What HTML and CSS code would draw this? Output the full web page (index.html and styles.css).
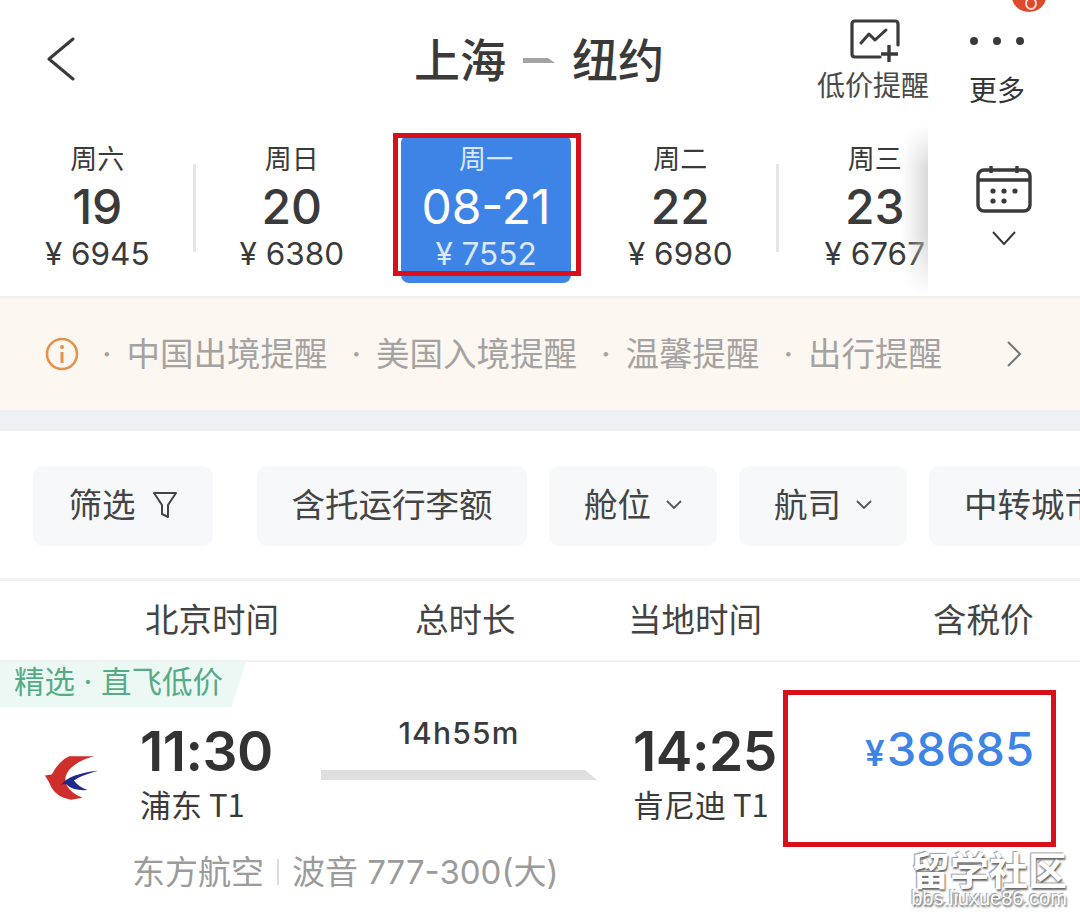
FILE: index.html
```html
<!DOCTYPE html>
<html lang="zh-CN">
<head>
    <meta charset="UTF-8">
    <title>上海 - 纽约</title>
    <link rel="stylesheet" href="styles.css">
</head>
<body>
    <div class="page">
        <div class="header">
            <svg class="back" width="30" height="44" viewBox="0 0 30 44"><path d="M27 2 L3 22 L27 42" fill="none" stroke="#3a3a3a" stroke-width="3" stroke-linecap="round" stroke-linejoin="round"/></svg>
            <h1 class="title">
                <span>上海</span>
                <svg width="34" height="8" viewBox="0 0 34 8"><path d="M1 2 H26 L33 7 H1 Z" fill="#a3a3a3"/></svg>
                <span>纽约</span>
            </h1>
            <div class="actions">
                <div class="action action-alert">
                    <svg width="50" height="44" viewBox="0 0 50 44"><path d="M30 38 H5 Q2 38 2 35 V5 Q2 2 5 2 H45 Q48 2 48 5 V26" fill="none" stroke="#3a3a3a" stroke-width="3.2" stroke-linecap="round"/><path d="M11 24 L19 15 L25 21 L36 11" fill="none" stroke="#3a3a3a" stroke-width="3" stroke-linecap="round" stroke-linejoin="round"/><path d="M39 26 V43 M31 35 H48" stroke="#3a3a3a" stroke-width="3.4"/></svg>
                    <span>低价提醒</span>
                </div>
                <div class="action action-more">
                    <div class="dots"><i></i><i></i><i></i></div>
                    <span>更多</span>
                    <div class="badge"></div>
                </div>
            </div>
        </div>

        <div class="dates">
            <div class="date-list">
                <div class="date-item">
                    <div class="weekday">周六</div><div class="day">19</div><div class="price">¥ 6945</div>
                </div>
                <div class="date-item sep">
                    <div class="weekday">周日</div><div class="day">20</div><div class="price">¥ 6380</div>
                </div>
                <div class="date-item active">
                    <div class="weekday">周一</div><div class="day">08-21</div><div class="price">¥ 7552</div>
                    <div class="mark mark-date"></div>
                </div>
                <div class="date-item">
                    <div class="weekday">周二</div><div class="day">22</div><div class="price">¥ 6980</div>
                </div>
                <div class="date-item sep">
                    <div class="weekday">周三</div><div class="day">23</div><div class="price">¥ 6767</div>
                </div>
            </div>
            <div class="calendar-btn">
                <svg width="56" height="48" viewBox="0 0 56 48"><rect x="2" y="5" width="52" height="41" rx="6" fill="none" stroke="#3a3a3a" stroke-width="3.4"/><path d="M2 15 H54 M15 1 V8 M41 1 V8" stroke="#3a3a3a" stroke-width="3.4"/><g fill="#3a3a3a"><circle cx="17" cy="26" r="2.6"/><circle cx="28" cy="26" r="2.6"/><circle cx="39" cy="26" r="2.6"/><circle cx="17" cy="36" r="2.6"/><circle cx="28" cy="36" r="2.6"/></g></svg>
                <svg class="cal-arrow" width="26" height="16" viewBox="0 0 26 16"><path d="M2 2 L13 14 L24 2" fill="none" stroke="#3a3a3a" stroke-width="2"/></svg>
            </div>
        </div>

        <div class="notice">
            <svg width="34" height="34" viewBox="0 0 34 34"><circle cx="17" cy="17" r="15" fill="none" stroke="#e2924a" stroke-width="2.6"/><circle cx="17" cy="10" r="2" fill="#e2924a"/><path d="M17 15 V26" stroke="#e2924a" stroke-width="3"/></svg>
            <div class="notice-links">
                <span>·  中国出境提醒</span>
                <span>·  美国入境提醒</span>
                <span>·  温馨提醒</span>
                <span>·  出行提醒</span>
            </div>
            <svg class="notice-arrow" width="16" height="28" viewBox="0 0 16 28"><path d="M2 2 L14 14 L2 26" fill="none" stroke="#777" stroke-width="2"/></svg>
        </div>
        <div class="strip"></div>

        <div class="filters">
            <div class="chip chip-filter">筛选
                <svg width="26" height="30" viewBox="0 0 26 30"><path d="M2 3 H24 L16 15 V27 L10 24 V15 Z" fill="none" stroke="#444" stroke-width="2" stroke-linejoin="round"/></svg>
            </div>
            <div class="chip chip-bag">含托运行李额</div>
            <div class="chip chip-drop">舱位
                <svg width="16" height="10" viewBox="0 0 16 10"><path d="M1 1 L8 8 L15 1" fill="none" stroke="#555" stroke-width="1.8"/></svg>
            </div>
            <div class="chip chip-drop">航司
                <svg width="16" height="10" viewBox="0 0 16 10"><path d="M1 1 L8 8 L15 1" fill="none" stroke="#555" stroke-width="1.8"/></svg>
            </div>
            <div class="chip chip-city">中转城市</div>
        </div>

        <div class="columns">
            <span>北京时间</span>
            <span>总时长</span>
            <span>当地时间</span>
            <span>含税价</span>
        </div>

        <div class="flight">
            <div class="tag">精选 · 直飞低价</div>
            <div class="flight-main">
                <svg class="logo" width="56" height="45" viewBox="0 0 58 46">
                    <path d="M1 21 L8 20 Q16 5 26 1 L52 1 Q36 5 27 14 Q20 22 23 30 Q28 40 40 44 L28 46 Q14 44 8 34 Q5 27 1 21 Z" fill="#cf2f2a"/>
                    <path d="M17 31 Q26 19 56 16 Q38 21 31 26 Q35 32 45 36 Q30 37 23 30 Q20 29 17 31 Z" fill="#1e2a8c"/>
                </svg>
                <div class="leg leg-dep">
                    <div class="time">11:30</div>
                    <div class="airport">浦东 T1</div>
                </div>
                <div class="duration">
                    <div class="dur-text">14h55m</div>
                    <svg width="276" height="10" viewBox="0 0 276 10"><path d="M0 0 H264 L276 10 H0 Z" fill="#dfdfdf"/></svg>
                </div>
                <div class="leg leg-arr">
                    <div class="time">14:25</div>
                    <div class="airport">肯尼迪 T1</div>
                </div>
                <div class="fare"><small>¥</small>38685
                    <div class="mark mark-fare"></div>
                </div>
            </div>
            <div class="flight-meta">东方航空<i></i>波音 777-300(大)</div>
        </div>

        <div class="watermark">
            <b>留学社区</b>
            <span>bbs.liuxue86.com</span>
        </div>
    </div>
</body>
</html>
```

FILE: styles.css
```css
* {
    box-sizing: border-box;
}
body {
    margin: 0;
    background: #fff;
    color: #3a3a3a;
    font-family: "Inter", "Noto Sans CJK SC", sans-serif;
}
.page {
    position: relative;
    width: 1080px;
    height: 919px;
    overflow: hidden;
}

/* top bar */
.header {
    height: 125px;
    position: relative;
    display: flex;
    align-items: flex-start;
    padding-left: 46px;
}
.back {
    margin-top: 37px;
}
.title {
    position: absolute;
    top: 22px;
    left: 414px;
    margin: 0;
    display: flex;
    align-items: center;
    gap: 16px;
    font-family: "Noto Sans CJK SC", sans-serif;
    font-size: 46px;
    font-weight: 500;
    line-height: 70px;
}
.title svg {
    margin-top: 6px;
}
.actions {
    margin-left: auto;
    display: flex;
    font-family: "Noto Sans CJK SC", sans-serif;
}
.action {
    position: relative;
    display: flex;
    flex-direction: column;
    align-items: center;
    font-size: 28px;
    line-height: 36px;
}
.action-alert {
    width: 114px;
    margin-top: 19px;
    margin-right: 38px;
}
.action-alert svg {
    margin-left: 3px;
}
.action-alert span {
    margin-top: 3px;
    color: #4a4a4a;
    white-space: nowrap;
}
.action-more {
    width: 58px;
    margin-right: 54px;
    color: #333;
}
.dots {
    display: flex;
    gap: 15px;
    margin-top: 37px;
    height: 16px;
}
.dots i {
    width: 8px;
    height: 8px;
    border-radius: 50%;
    background: #3a3a3a;
}
.action-more span {
    margin-top: 18px;
    white-space: nowrap;
}
.badge {
    position: absolute;
    top: -18px;
    left: 44px;
    width: 34px;
    height: 30px;
    border-radius: 50%;
    background: #dd4a2c;
}
.badge::after {
    content: "";
    position: absolute;
    left: 13px;
    top: 15px;
    width: 8px;
    height: 9px;
    border: 2px solid #f8d8cf;
    border-radius: 50%;
}

/* date strip */
.dates {
    height: 173px;
    display: flex;
    border-bottom: 2px solid #f3f1f0;
}
.date-list {
    flex: none;
    width: 928px;
    display: flex;
    position: relative;
    overflow: hidden;
}
.date-list::after {
    content: "";
    position: absolute;
    right: 0;
    top: 0;
    bottom: 0;
    width: 26px;
    background: linear-gradient(to right, rgba(205, 205, 205, 0), rgba(205, 205, 205, 0.75));
    -webkit-mask-image: linear-gradient(to bottom, transparent, #000 25%, #000 65%, transparent);
    mask-image: linear-gradient(to bottom, transparent, #000 25%, #000 65%, transparent);
}
.date-item {
    flex: none;
    width: 194.5px;
    position: relative;
    display: flex;
    flex-direction: column;
    align-items: center;
    padding-top: 12px;
}
.date-item.sep::before {
    content: "";
    position: absolute;
    left: -2px;
    top: 39px;
    height: 88px;
    width: 3px;
    background: #e6e6e6;
}
.weekday {
    font-family: "Noto Sans CJK SC", sans-serif;
    font-size: 27px;
    line-height: 41px;
}
.day {
    margin-top: 1px;
    font-size: 48px;
    font-weight: 500;
    line-height: 56px;
}
.price {
    font-size: 31.5px;
    line-height: 38px;
    white-space: nowrap;
}
.active {
    width: 170px;
    margin: 10px 12px 13px;
    padding-top: 2px;
    background: #3e84e6;
    border-radius: 8px;
    color: #fff;
}
.active .day {
    font-weight: 400;
}
.active .weekday,
.active .price {
    color: #dbe8fb;
}
.mark {
    position: absolute;
    border: 5px solid #d8101c;
    pointer-events: none;
}
.mark-date {
    left: -8px;
    top: -2px;
    width: 188px;
    height: 143px;
}
.calendar-btn {
    flex: 1;
    display: flex;
    flex-direction: column;
    align-items: center;
    padding-top: 40px;
}
.cal-arrow {
    margin-top: 17px;
}

/* notice */
.notice {
    height: 112px;
    background: #fdf7f2;
    display: flex;
    align-items: center;
    padding: 0 58px 0 45px;
}
.notice-links {
    display: flex;
    margin: -6px 0 0 23px;
    gap: 24px;
    font-size: 33.5px;
    word-spacing: -2px;
    color: #a5a3a1;
    white-space: pre;
}
.notice-arrow {
    margin-left: auto;
}
.strip {
    height: 21px;
    background: #edf1f3;
}

/* filter chips */
.filters {
    height: 150px;
    display: flex;
    align-items: flex-start;
    gap: 22px;
    padding: 35px 0 0 33px;
    border-bottom: 3px solid #f2f2f2;
    font-family: "Noto Sans CJK SC", sans-serif;
    font-size: 33.5px;
    color: #444;
    overflow: hidden;
}
.chip {
    flex: none;
    height: 80px;
    padding-bottom: 8px;
    display: flex;
    align-items: center;
    justify-content: center;
    background: #f6f8fa;
    border-radius: 10px;
    white-space: nowrap;
}
.chip svg {
    margin-top: 6px;
}
.chip-filter {
    width: 180px;
    gap: 16px;
    margin-right: 22px;
}
.chip-bag {
    width: 270px;
}
.chip-drop {
    width: 168px;
    gap: 15px;
}
.chip-city {
    width: 180px;
    justify-content: flex-start;
    padding-left: 35px;
}

/* column titles */
.columns {
    height: 81px;
    display: grid;
    grid-template-columns: 270px 213px 305px auto;
    align-items: center;
    padding: 0 0 6px 145px;
    border-bottom: 2px solid #f2f2f2;
    font-family: "Noto Sans CJK SC", sans-serif;
    font-size: 33.5px;
    color: #444;
    white-space: nowrap;
}

/* flight card */
.tag {
    width: 246px;
    height: 45px;
    padding-left: 14px;
    background: #ecf8f3;
    clip-path: polygon(0 0, 100% 0, 94% 100%, 0 100%);
    font-size: 30.5px;
    line-height: 40px;
    color: #55ab85;
    white-space: nowrap;
}
.flight-main {
    display: flex;
    padding-left: 44px;
    height: 123px;
}
.logo {
    flex: none;
    margin-top: 48px;
    margin-right: 40px;
}
.leg {
    flex: none;
    display: flex;
    flex-direction: column;
}
.leg-dep {
    width: 181px;
}
.leg-arr {
    width: 150px;
    margin-left: 36px;
}
.time {
    font-size: 55px;
    font-weight: 600;
    line-height: 62px;
    margin-top: 13px;
    letter-spacing: -0.5px;
    color: #333;
    white-space: nowrap;
}
.airport {
    font-family: "Noto Sans CJK SC", sans-serif;
    font-size: 31px;
    line-height: 48px;
    margin-top: -2px;
    white-space: nowrap;
}
.duration {
    flex: none;
    width: 276px;
    display: flex;
    flex-direction: column;
    align-items: center;
}
.dur-text {
    font-size: 30px;
    font-weight: 500;
    letter-spacing: 1.2px;
    line-height: 36px;
    margin-top: 8px;
    margin-bottom: 19px;
}
.fare {
    flex: 1;
    position: relative;
    text-align: right;
    padding-right: 46px;
    font-size: 47px;
    font-weight: 500;
    line-height: 60px;
    margin-top: 12px;
    color: #3e84e6;
}
.fare small {
    font-size: 35px;
    font-weight: 600;
    margin-right: 2px;
}
.mark-fare {
    left: 0;
    top: -29px;
    width: 273px;
    height: 157px;
}
.flight-meta {
    display: flex;
    align-items: center;
    padding-left: 132px;
    margin-top: 19px;
    font-size: 33px;
    line-height: 46px;
    color: #9b9b9b;
    white-space: pre;
}
.flight-meta i {
    width: 2px;
    height: 26px;
    background: #ddd;
    margin: 0 13px;
}

/* site stamp */
.watermark {
    position: absolute;
    left: 911px;
    top: 848px;
    display: flex;
    flex-direction: column;
    align-items: center;
    color: #fff;
    text-shadow: 1px 2px 2px #666, -1px -1px 1px #999;
}
.watermark b {
    font-family: "Noto Sans CJK SC", sans-serif;
    font-size: 39px;
    font-weight: 700;
    line-height: 40px;
}
.watermark span {
    font-family: "Liberation Sans", sans-serif;
    font-size: 20px;
    line-height: 20px;
}
```
